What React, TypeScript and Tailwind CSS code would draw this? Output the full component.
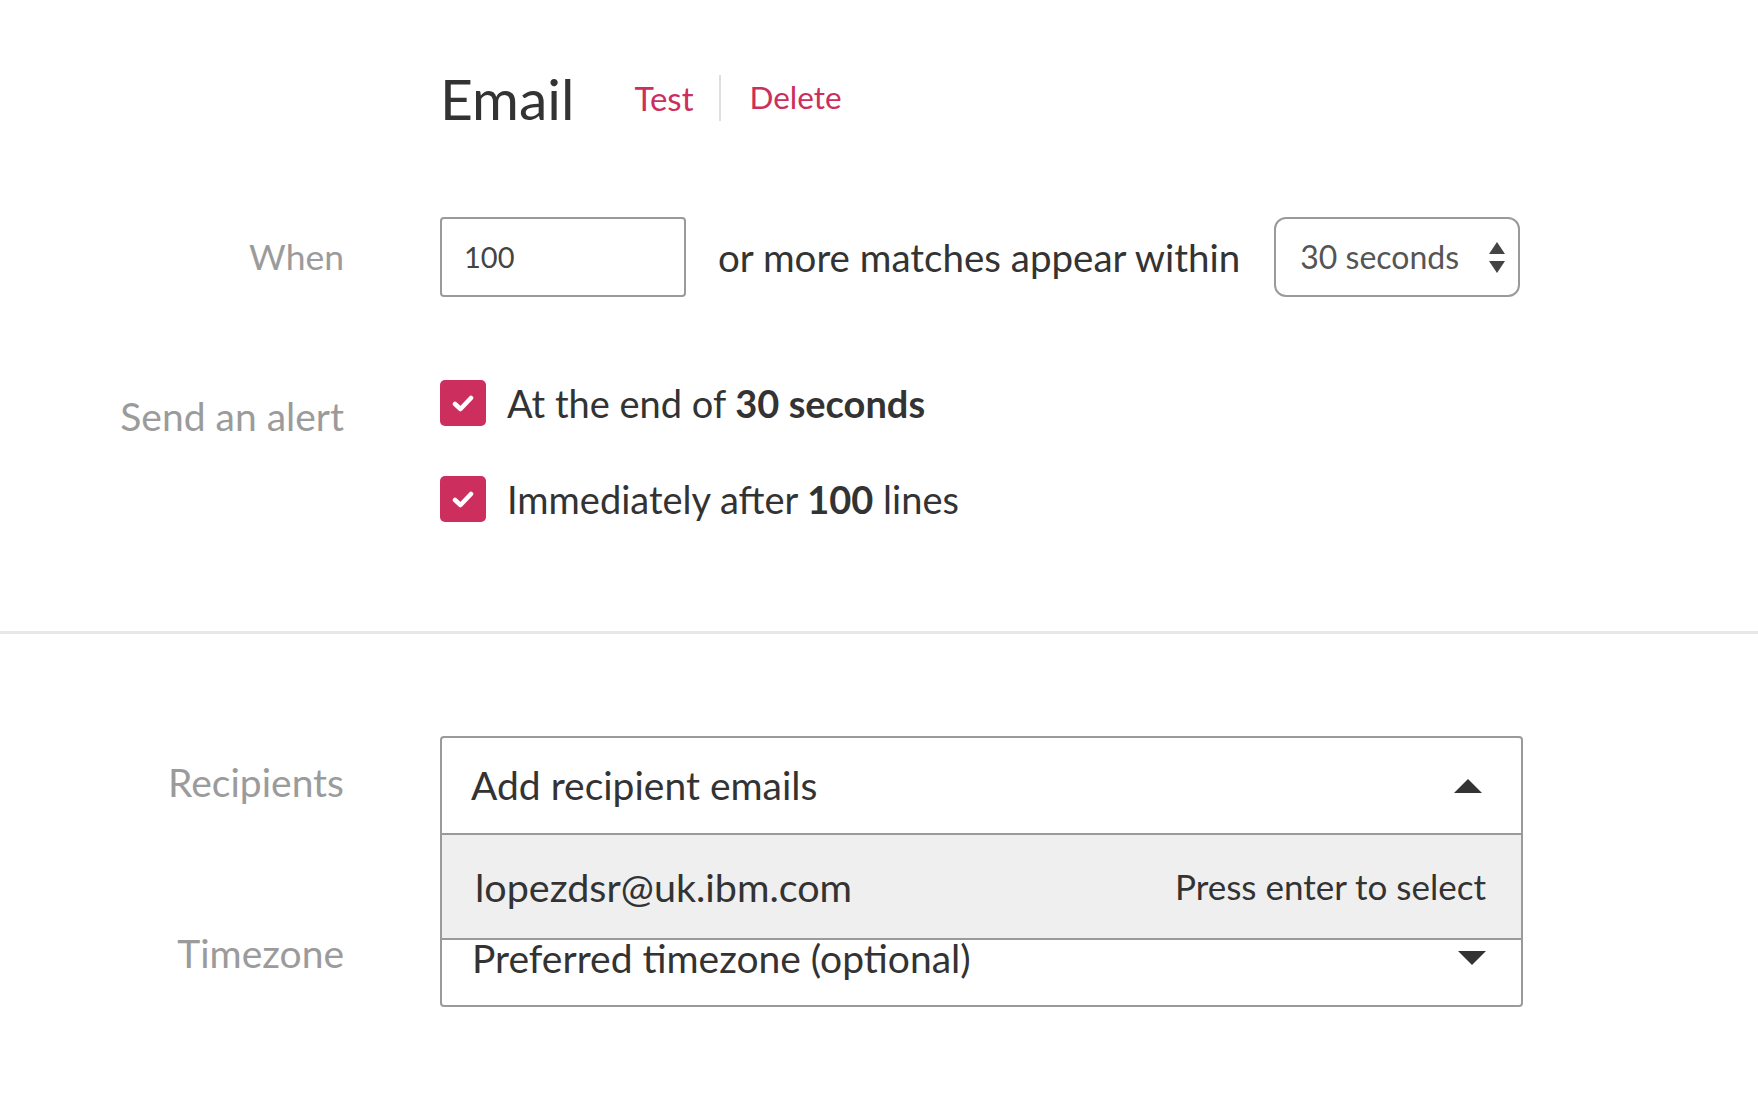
const font = { fontFamily: 'Lato, "Open Sans", sans-serif' };

function UpDown() {
  return (
    <svg width="18" height="32" viewBox="0 0 18 32" className="absolute right-[12px] top-[23px]">
      <path d="M9 0 L17 12 L1 12 Z" fill="#444" />
      <path d="M1 19 L17 19 L9 31 Z" fill="#444" />
    </svg>
  );
}

function Caret({ up }: { up?: boolean }) {
  return (
    <svg width="28" height="14" viewBox="0 0 28 14">
      {up ? <path d="M14 0 L28 14 L0 14 Z" fill="#333" /> : <path d="M0 0 L28 0 L14 14 Z" fill="#333" />}
    </svg>
  );
}

function Check() {
  return (
    <div className="w-[46px] h-[46px] rounded-[5px] bg-[#cc2e5d] flex items-center justify-center">
      <svg width="22" height="17" viewBox="0 0 22 17">
        <path d="M3 9 L8.5 14 L19 3" fill="none" stroke="#fff" strokeWidth="4.5" strokeLinecap="round" strokeLinejoin="round" />
      </svg>
    </div>
  );
}

function Label({ children, className = '' }: { children: React.ReactNode; className?: string }) {
  return (
    <div className={`w-[344px] shrink-0 text-right leading-none text-[#9b9b9b] ${className}`}>
      {children}
    </div>
  );
}

export default function App() {
  return (
    <div className="min-h-screen w-full bg-white text-[#333]" style={font}>
      {/* header */}
      <div className="pt-[68px] pl-[440px] flex items-center h-[128px]">
        <h1 className="text-[57px] leading-none text-[#333]">Email</h1>
        <button className="ml-[60px] text-[33px] leading-none text-[#cc2e5d]">Test</button>
        <div className="ml-[26px] w-[2px] h-[46px] bg-[#dedede]" />
        <button className="ml-[28px] text-[31.5px] leading-none text-[#cc2e5d]">Delete</button>
      </div>

      {/* when */}
      <div className="mt-[89px] flex items-center h-[80px]">
        <Label className="text-[35.5px]">When</Label>
        <div className="ml-[96px] w-[246px] h-[80px] border-2 border-[#9a9a9a] rounded-[4px] pl-[22px] flex items-center text-[29px] text-[#444]">
          100
        </div>
        <span className="ml-[32px] text-[38.5px] leading-none text-[#333]">or more matches appear within</span>
        <div className="ml-[34px] relative w-[246px] h-[80px] border-2 border-[#9a9a9a] rounded-[12px] pl-[24px] flex items-center text-[32px] text-[#555]">
          30 seconds
          <UpDown />
        </div>
      </div>

      {/* send an alert */}
      <div className="mt-[83px] flex items-start">
        <Label className="text-[39px] pt-[17px]">Send an alert</Label>
        <div className="ml-[96px] flex flex-col gap-[50px]">
          <div className="flex items-center gap-[21px]">
            <Check />
            <span className="text-[38px] leading-none text-[#333]">
              At the end of <b className="font-bold">30 seconds</b>
            </span>
          </div>
          <div className="flex items-center gap-[21px]">
            <Check />
            <span className="text-[38px] leading-none text-[#333]">
              Immediately after <b className="font-bold">100</b> lines
            </span>
          </div>
        </div>
      </div>

      <div className="mt-[109px] h-[3px] w-full bg-[#e7e7e7]" />

      {/* recipients */}
      <div className="mt-[102px] flex items-center relative z-10">
        <Label className="text-[39px] pb-[6px]">Recipients</Label>
        <div className="ml-[96px] w-[1083px] relative">
          <div className="h-[99px] border-2 border-[#9a9a9a] rounded-t-[4px] flex items-center justify-between pl-[29px] pr-[39px] bg-white">
            <span className="text-[39px] leading-none text-[#333]">Add recipient emails</span>
            <Caret up />
          </div>
          <div className="absolute left-0 right-0 top-full h-[105px] bg-[#efefef] border-2 border-t-0 border-[#9a9a9a] flex items-center justify-between pl-[33px] pr-[35px]">
            <span className="text-[39.5px] leading-none text-[#333]">lopezdsr@uk.ibm.com</span>
            <span className="text-[35px] leading-none text-[#333]">Press enter to select</span>
          </div>
        </div>
      </div>

      {/* timezone */}
      <div className="mt-[73px] flex items-center">
        <Label className="text-[39px] pb-[8px]">Timezone</Label>
        <div className="ml-[96px] w-[1083px] h-[99px] border-2 border-[#9a9a9a] rounded-[4px] flex items-center justify-between pl-[30px] pr-[35px] pt-[1px]">
          <span className="text-[39px] leading-none text-[#333]">Preferred timezone (optional)</span>
          <Caret />
        </div>
      </div>
    </div>
  );
}
